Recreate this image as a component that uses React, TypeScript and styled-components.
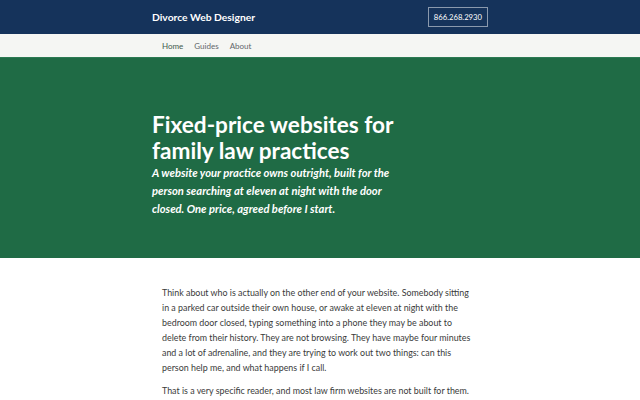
import styled, { createGlobalStyle } from 'styled-components';

const GlobalStyle = createGlobalStyle`
  html, body {
    margin: 0;
    padding: 0;
    background: #fff;
  }
  body {
    font-family: Lato, "Open Sans", sans-serif;
    color: #333;
  }
`;

const Wrap = styled.div`
  width: 336px;
  margin: 0 auto;
`;

const TopBar = styled.header`
  background-color: #15335b;
  height: 34px;
`;

const TopInner = styled(Wrap)`
  display: flex;
  align-items: center;
  justify-content: space-between;
  height: 100%;
`;

const Brand = styled.a`
  color: #fff;
  font-weight: 700;
  font-size: 10.3px;
  text-decoration: none;
`;

const Phone = styled.a`
  display: block;
  border: 1px solid rgba(255, 255, 255, 0.5);
  color: #fff;
  font-size: 7.7px;
  line-height: 10px;
  padding: 4px 5px;
  text-decoration: none;
`;

const NavBar = styled.nav`
  background-color: #f5f6f3;
  border-bottom: 1px solid #2c7a52;
  height: 23px;
`;

const NavInner = styled(Wrap)`
  display: flex;
  align-items: center;
  gap: 11px;
  height: 100%;
  padding: 1px 0 0 10px;
  box-sizing: border-box;
`;

const NavLink = styled.a<{ $active?: boolean }>`
  font-size: 8px;
  color: ${(p) => (p.$active ? '#3f5a4c' : '#62666a')};
  text-decoration: none;
`;

const Hero = styled.section`
  background-color: #1f6b45;
  color: #fff;
  padding: 54px 0 40px;
`;

const HeroText = styled.div`
  max-width: 255px;
`;

const Title = styled.h1`
  margin: 0;
  font-size: 22.6px;
  line-height: 26px;
  font-weight: 700;
`;

const Lead = styled.p`
  margin: 0;
  font-size: 11.2px;
  line-height: 18px;
  font-style: italic;
  font-weight: 700;
`;

const Content = styled(Wrap)`
  padding: 27px 10px 0;
  box-sizing: border-box;
`;

const Para = styled.p`
  margin: 0 0 8px;
  font-size: 8.9px;
  line-height: 15px;
  color: #3a3a3a;
`;

export default function App() {
  return (
    <>
      <GlobalStyle />
      <TopBar>
        <TopInner>
          <Brand href="#">Divorce Web Designer</Brand>
          <Phone href="#">866.268.2930</Phone>
        </TopInner>
      </TopBar>
      <NavBar>
        <NavInner>
          <NavLink $active href="#">Home</NavLink>
          <NavLink href="#">Guides</NavLink>
          <NavLink href="#">About</NavLink>
        </NavInner>
      </NavBar>
      <Hero>
        <Wrap>
          <HeroText>
            <Title>Fixed-price websites for family law practices</Title>
            <Lead>
              A website your practice owns outright, built for the person searching at eleven at
              night with the door closed. One price, agreed before I start.
            </Lead>
          </HeroText>
        </Wrap>
      </Hero>
      <Content>
        <Para>
          Think about who is actually on the other end of your website. Somebody sitting in a
          parked car outside their own house, or awake at eleven at night with the bedroom door
          closed, typing something into a phone they may be about to delete from their history.
          They are not browsing. They have maybe four minutes and a lot of adrenaline, and they are
          trying to work out two things: can this person help me, and what happens if I call.
        </Para>
        <Para>That is a very specific reader, and most law firm websites are not built for them.</Para>
      </Content>
    </>
  );
}
